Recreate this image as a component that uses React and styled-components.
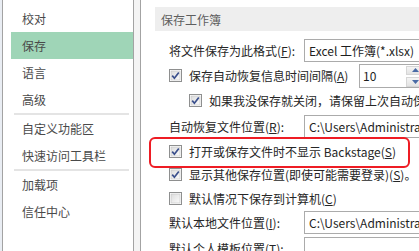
import React from 'react';
import styled, { createGlobalStyle } from 'styled-components';

const GlobalStyle = createGlobalStyle`
  html, body {
    margin: 0;
    padding: 0;
    background: #ffffff;
  }
  body {
    font-family: "Noto Sans CJK SC", "Liberation Sans", sans-serif;
    font-size: 12px;
  }
`;

const Window = styled.div`
  display: flex;
  width: 419px;
  height: 251px;
  overflow: hidden;
  background: #ffffff;
`;

const LeftEdge = styled.div`
  width: 2px;
  flex-shrink: 0;
  background: #e9edf3;
  border-right: 1px solid #a3a3a3;
`;

const Sidebar = styled.nav`
  width: 130px;
  flex-shrink: 0;
  padding-top: 5px;
  border-right: 1px solid #a3a3a3;
  background: #ffffff;
`;

const Gutter = styled.div`
  width: 6px;
  flex-shrink: 0;
  background: #f4f4f4;
  border-right: 1px solid #a3a3a3;
`;

const NavItem = styled.div`
  display: flex;
  align-items: center;
  height: 27px;
  margin-left: 8px;
  padding-left: 11px;
  color: #4a4a4a;
  font-size: 12px;
  background: ${({ $active }) => ($active ? '#9fd5b7' : 'transparent')};
`;

const NavDivider = styled.div`
  height: 2px;
  margin: 0 4px 0 11px;
  background: #e4e4e4;
`;

const Content = styled.main`
  position: relative;
  flex: 1;
  min-width: 0;
  padding-top: 7px;
  overflow: hidden;
`;

const SectionHeader = styled.div`
  display: flex;
  align-items: center;
  height: 24px;
  margin-left: 14px;
  margin-bottom: 7px;
  padding-left: 6px;
  background: #eeeeee;
  color: #5e5e5e;
  font-size: 12px;
  white-space: nowrap;
`;

const Row = styled.div`
  display: flex;
  align-items: center;
  height: ${({ $h }) => $h}px;
  padding-left: ${({ $indent }) => ($indent ? 48 : 28)}px;
  color: #262626;
  white-space: nowrap;
`;

const Label = styled.span`
  width: ${({ $w }) => ($w ? `${$w}px` : 'auto')};
  flex-shrink: 0;
`;

const Key = styled.span`
  text-decoration: underline;
  text-underline-offset: 1px;
`;

const TextBox = styled.div`
  display: flex;
  align-items: center;
  flex-shrink: 0;
  width: ${({ $w }) => $w}px;
  height: 23px;
  box-sizing: border-box;
  padding-left: 4px;
  border: 1px solid #ababab;
  background: #ffffff;
  color: #1e1e1e;
`;

const SpinBox = styled.div`
  display: flex;
  flex-shrink: 0;
  width: 80px;
  height: 24px;
  box-sizing: border-box;
  border: 1px solid #ababab;
  background: #ffffff;
`;

const SpinValue = styled.div`
  display: flex;
  align-items: center;
  width: 43px;
  padding-left: 3px;
  color: #1e1e1e;
`;

const SpinButtons = styled.div`
  display: flex;
  flex-direction: column;
  justify-content: center;
  gap: 2px;
  padding-top: 1px;
`;

const SpinButton = styled.div`
  display: flex;
  align-items: center;
  justify-content: center;
  width: 16px;
  height: 8px;
  border: 1px solid #d6d6d6;
  background: linear-gradient(#f4f4f4, #e3e3e3);
`;

const CheckWrap = styled.span`
  display: inline-flex;
  width: 13px;
  height: 13px;
  margin-right: 7px;
  flex-shrink: 0;
`;

const Highlight = styled.div`
  position: absolute;
  left: 8px;
  top: 137px;
  width: 257px;
  height: 27px;
  border: 2px solid #ee1c24;
  border-radius: 6px;
  pointer-events: none;
`;

const CheckBox = ({ checked }) => (
  <CheckWrap>
    <svg width="13" height="13" viewBox="0 0 13 13">
      <defs>
        <linearGradient id="cbg" x1="0" y1="0" x2="1" y2="1">
          <stop offset="0" stopColor="#dcdcdc" />
          <stop offset="1" stopColor="#fbfbfb" />
        </linearGradient>
      </defs>
      <rect x="0.5" y="0.5" width="12" height="12" fill="#ffffff" stroke="#8e8f8f" />
      <rect x="2" y="2" width="9" height="9" fill="url(#cbg)" stroke="#c2c2c2" strokeWidth="0.6" />
      {checked && (
        <path d="M3.2 6.6 L5.4 9.2 L9.8 3.4" fill="none" stroke="#3a4f8c" strokeWidth="1.7" />
      )}
    </svg>
  </CheckWrap>
);

const Arrow = ({ up }) => (
  <svg width="7" height="4" viewBox="0 0 7 4">
    <path d={up ? 'M0 4 L3.5 0 L7 4 Z' : 'M0 0 L3.5 4 L7 0 Z'} fill="#4a6aa5" />
  </svg>
);

const navTop = ['校对', '保存', '语言', '高级'];
const navMid = ['自定义功能区', '快速访问工具栏'];
const navBottom = ['加载项', '信任中心'];

const App = () => (
  <>
    <GlobalStyle />
    <Window>
      <LeftEdge />
      <Sidebar>
        {navTop.map((item) => (
          <NavItem key={item} $active={item === '保存'}>{item}</NavItem>
        ))}
        <NavDivider />
        {navMid.map((item) => (
          <NavItem key={item}>{item}</NavItem>
        ))}
        <NavDivider />
        {navBottom.map((item) => (
          <NavItem key={item}>{item}</NavItem>
        ))}
      </Sidebar>
      <Gutter />
      <Content>
        <SectionHeader>保存工作簿</SectionHeader>

        <Row $h={25}>
          <Label $w={135}>将文件保存为此格式(<Key>F</Key>):</Label>
          <TextBox $w={150}>Excel 工作簿(*.xlsx)</TextBox>
        </Row>

        <Row $h={25}>
          <CheckBox checked />
          <Label $w={170}>保存自动恢复信息时间间隔(<Key>A</Key>)</Label>
          <SpinBox>
            <SpinValue>10</SpinValue>
            <SpinButtons>
              <SpinButton><Arrow up /></SpinButton>
              <SpinButton><Arrow /></SpinButton>
            </SpinButtons>
          </SpinBox>
        </Row>

        <Row $h={25} $indent>
          <CheckBox checked />
          <Label>如果我没保存就关闭，请保留上次自动保存的版本(<Key>U</Key>)</Label>
        </Row>

        <Row $h={26}>
          <Label $w={135}>自动恢复文件位置(<Key>R</Key>):</Label>
          <TextBox $w={150}>C:\Users\Administrator\AppData</TextBox>
        </Row>

        <Row $h={24}>
          <CheckBox checked />
          <Label>打开或保存文件时不显示 Backstage(<Key>S</Key>)</Label>
        </Row>

        <Row $h={23}>
          <CheckBox checked />
          <Label>显示其他保存位置(即使可能需要登录)(<Key>S</Key>)。</Label>
        </Row>

        <Row $h={24}>
          <CheckBox />
          <Label>默认情况下保存到计算机(<Key>C</Key>)</Label>
        </Row>

        <Row $h={25}>
          <Label $w={135}>默认本地文件位置(<Key>I</Key>):</Label>
          <TextBox $w={150}>C:\Users\Administrator\Documents</TextBox>
        </Row>

        <Row $h={26}>
          <Label $w={135}>默认个人模板位置(<Key>T</Key>):</Label>
          <TextBox $w={150} />
        </Row>

        <Highlight />
      </Content>
    </Window>
  </>
);

export default App;
